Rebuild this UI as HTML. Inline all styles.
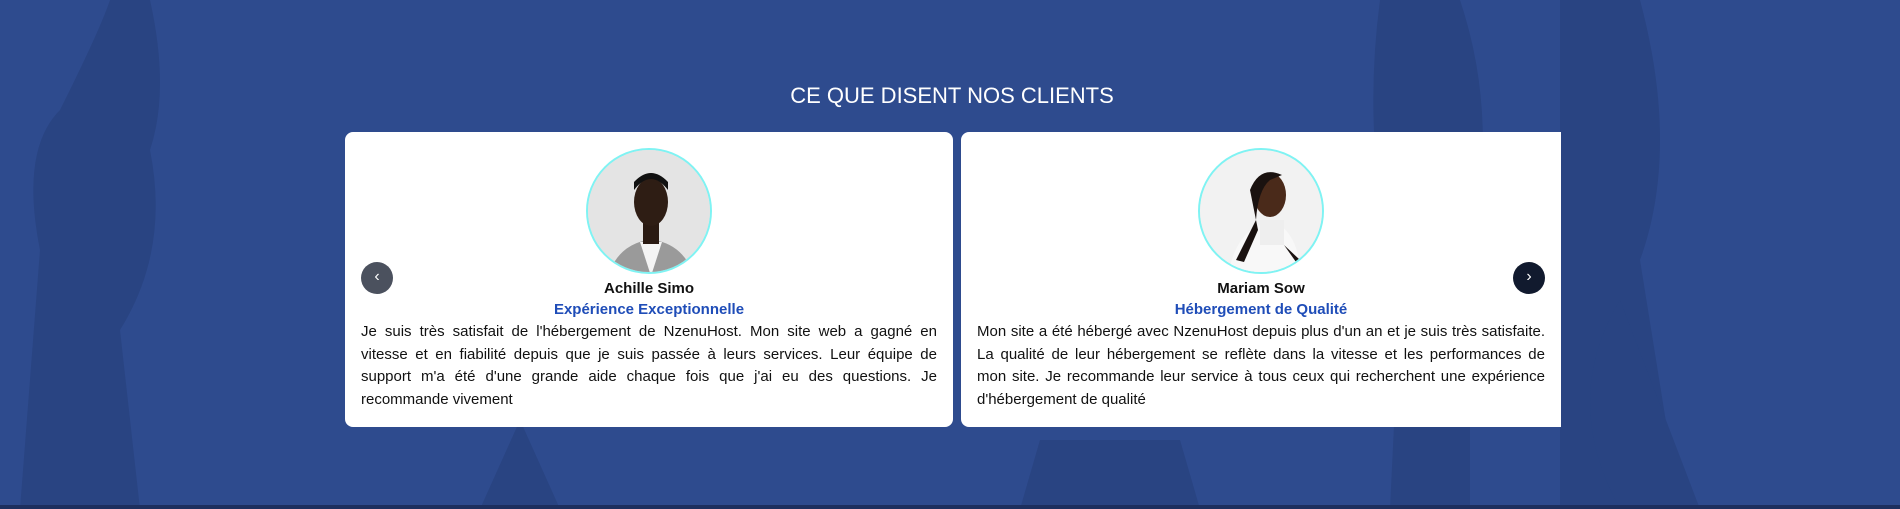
<!DOCTYPE html>
<html><head><meta charset="utf-8"><style>
*{margin:0;padding:0;box-sizing:border-box}
body{width:1900px;height:509px;overflow:hidden;background:#2e4b8e;font-family:"Liberation Sans",sans-serif;position:relative}
.bg{position:absolute;inset:0}
h2{position:absolute;top:83px;left:0;width:1904px;text-align:center;color:#fff;font-weight:normal;font-size:22px;letter-spacing:0}
.card{position:absolute;top:132px;height:295px;background:#fff;border-radius:8px;padding:0 16px;text-align:center}
.av{width:126px;height:126px;border-radius:50%;border:2px solid #7ff3f3;margin:16px auto 0;overflow:hidden;background:#e6e6e6}
.nm{font-weight:bold;font-size:15px;color:#111;margin-top:5px;line-height:20px}
.sb{font-weight:bold;font-size:15px;color:#1f4db8;line-height:22px}
.tx{font-size:15px;color:#111;text-align:justify;line-height:22.7px}
.btn{position:absolute;width:32px;height:32px;border-radius:50%;color:#fff;font-size:16px;text-align:center;line-height:30px}
.bot{position:absolute;left:0;right:0;bottom:0;height:4px;background:#1d2f5e}
</style></head><body>
<svg class="bg" width="1900" height="509">
<g fill="#233c74" opacity=".45">
<path d="M20 509 L40 250 Q20 150 60 110 Q100 30 110 0 L150 0 Q170 90 150 150 Q170 250 120 330 L140 509Z"/>
<path d="M480 509 L520 420 L560 509Z"/>
<path d="M1380 0 L1460 0 Q1500 120 1470 250 L1470 509 L1390 509 L1400 300 Q1360 150 1380 0Z"/>
<path d="M1560 0 L1640 0 Q1680 150 1640 260 L1680 509 L1560 509 L1560 250Z"/>
<path d="M1620 509 Q1560 400 1620 300 L1700 509Z"/>
<path d="M1040 440 L1180 440 L1200 509 L1020 509Z"/>
</g>
</svg>
<h2>CE QUE DISENT NOS CLIENTS</h2>
<div class="card" style="left:345px;width:608px">
<div class="av"><svg width="126" height="126"><rect width="126" height="126" fill="#e4e4e4"/><path d="M20 126 Q30 95 60 90 L66 90 Q96 95 106 126Z" fill="#9a9a9a"/><path d="M52 92 L63 126 L74 92Z" fill="#f4f4f4"/><rect x="55" y="70" width="16" height="24" fill="#2a1a12"/><ellipse cx="63" cy="52" rx="17" ry="24" fill="#2e1d14"/><path d="M46 40 Q63 18 80 40 L80 32 Q63 14 46 32Z" fill="#111"/></svg></div>
<div class="nm">Achille Simo</div>
<div class="sb">Expérience Exceptionnelle</div>
<div class="tx">Je suis très satisfait de l'hébergement de NzenuHost. Mon site web a gagné en vitesse et en fiabilité depuis que je suis passée à leurs services. Leur équipe de support m'a été d'une grande aide chaque fois que j'ai eu des questions. Je recommande vivement</div>
</div>
<div class="card" style="left:961px;width:600px;border-radius:8px 0 0 8px">
<div class="av"><svg width="126" height="126"><rect width="126" height="126" fill="#f2f2f2"/><path d="M28 126 Q35 85 60 75 L80 75 Q100 90 100 126Z" fill="#f8f8f8"/><path d="M60 70 L84 70 L84 95 L60 95Z" fill="#eee"/><ellipse cx="70" cy="45" rx="16" ry="22" fill="#4a2a1a"/><path d="M50 40 Q60 15 82 25 L70 30 Q58 40 56 70 L36 110 L44 112 L58 80Z" fill="#1a1210"/><path d="M84 95 L100 110 L96 112Z" fill="#1a1210"/></svg></div>
<div class="nm">Mariam Sow</div>
<div class="sb">Hébergement de Qualité</div>
<div class="tx">Mon site a été hébergé avec NzenuHost depuis plus d'un an et je suis très satisfaite. La qualité de leur hébergement se reflète dans la vitesse et les performances de mon&nbsp;site. Je recommande leur service à tous ceux qui recherchent une expérience d'hébergement de qualité</div>
</div>
<div class="btn" style="left:361px;top:262px;background:#4b515e">&#8249;</div>
<div class="btn" style="left:1513px;top:262px;background:#111a2e">&#8250;</div>
<div class="bot"></div>
</body></html>
